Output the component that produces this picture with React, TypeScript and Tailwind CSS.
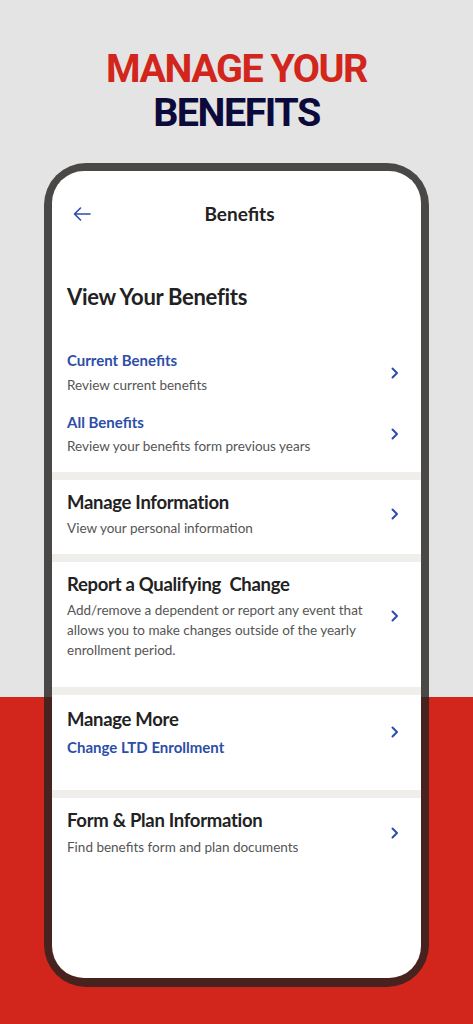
import React from "react";

const Chevron = () => (
  <svg width="10" height="12" viewBox="0 0 10 12" fill="none" className="shrink-0">
    <path d="M2.5 1.5 L7 6 L2.5 10.5" stroke="#2d4ea8" strokeWidth="2" strokeLinecap="round" strokeLinejoin="round" />
  </svg>
);

const Sep = () => <div className="h-2 bg-[#efeeeb]" />;

export default function App() {
  return (
    <div
      className="h-[1024px] w-full overflow-hidden bg-[linear-gradient(to_bottom,#e4e4e4_697px,#d2261c_697px)]"
      style={{ fontFamily: "Lato, 'Noto Sans', sans-serif" }}
    >
      <div
        className="pt-[47px] text-center text-[39.5px] leading-[44px] font-bold tracking-[-1.5px]"
        style={{ fontFamily: "Roboto, 'Noto Sans', sans-serif" }}
      >
        <div className="text-[#d2261c]">MANAGE YOUR</div>
        <div className="text-[#0b0a3b]">BENEFITS</div>
      </div>

      <div className="mx-auto mt-[28px] w-[385px] rounded-[42px] px-2 pt-2 pb-[9px] bg-[linear-gradient(to_bottom,#4a4846_534px,#48221f_534px)]">
        <div className="flex h-[807px] flex-col overflow-hidden rounded-[32px] bg-white text-[#222]">
          {/* header */}
          <div className="relative flex h-[86px] items-center justify-center">
            <svg width="18" height="14" viewBox="0 0 18 14" fill="none" className="absolute left-[21px]">
              <path d="M17 7 H1.5 M7.5 1 L1.5 7 L7.5 13" stroke="#2d4ea8" strokeWidth="1.6" strokeLinecap="round" strokeLinejoin="round" />
            </svg>
            <div className="pl-[6px] text-[19px] font-bold">Benefits</div>
          </div>

          {/* view your benefits */}
          <div className="pl-[15px] pr-[21px]">
            <div className="mt-[26px] text-[22px] leading-[28px] font-bold tracking-[-0.3px]">View Your Benefits</div>
            <div className="mt-[39px] flex items-center justify-between">
              <div>
                <div className="text-[15px] leading-[20px] font-bold text-[#2d4ea8]">Current Benefits</div>
                <div className="mt-[5px] text-[13.5px] leading-[20px] text-[#555]">Review current benefits</div>
              </div>
              <Chevron />
            </div>
            <div className="mt-[17px] flex items-center justify-between pb-4">
              <div>
                <div className="text-[15px] leading-[20px] font-bold text-[#2d4ea8]">All Benefits</div>
                <div className="mt-1 text-[13.5px] leading-[20px] text-[#555]">Review your benefits form previous years</div>
              </div>
              <Chevron />
            </div>
          </div>
          <Sep />

          <div className="flex items-center justify-between pl-[15px] pr-[21px] pt-[10px] pb-4">
            <div>
              <div className="text-[18.5px] leading-[24px] font-bold tracking-[-0.3px]">Manage Information</div>
              <div className="mt-1 text-[13.5px] leading-[20px] text-[#555]">View your personal information</div>
            </div>
            <Chevron />
          </div>
          <Sep />

          <div className="flex items-center justify-between pl-[15px] pr-[21px] pt-[10px] pb-[27px]">
            <div className="w-[300px]">
              <div className="text-[18.5px] leading-[24px] font-bold tracking-[-0.3px] whitespace-pre">Report a Qualifying  Change</div>
              <div className="mt-1 text-[13.5px] leading-[20px] text-[#555]">
                Add/remove a dependent or report any event that allows you to make changes outside of the yearly enrollment period.
              </div>
            </div>
            <Chevron />
          </div>
          <Sep />

          <div className="flex items-center justify-between pl-[15px] pr-[21px] pt-[12px] pb-[33px]">
            <div>
              <div className="text-[18.5px] leading-[24px] font-bold tracking-[-0.3px]">Manage More</div>
              <div className="mt-[6px] text-[15px] leading-[20px] font-bold text-[#2d4ea8]">Change LTD Enrollment</div>
            </div>
            <Chevron />
          </div>
          <Sep />

          <div className="flex items-center justify-between pl-[15px] pr-[21px] pt-[10px]">
            <div>
              <div className="text-[18.5px] leading-[24px] font-bold tracking-[-0.3px]">Form &amp; Plan Information</div>
              <div className="mt-[5px] text-[13.5px] leading-[20px] text-[#555]">Find benefits form and plan documents</div>
            </div>
            <Chevron />
          </div>
        </div>
      </div>
    </div>
  );
}
